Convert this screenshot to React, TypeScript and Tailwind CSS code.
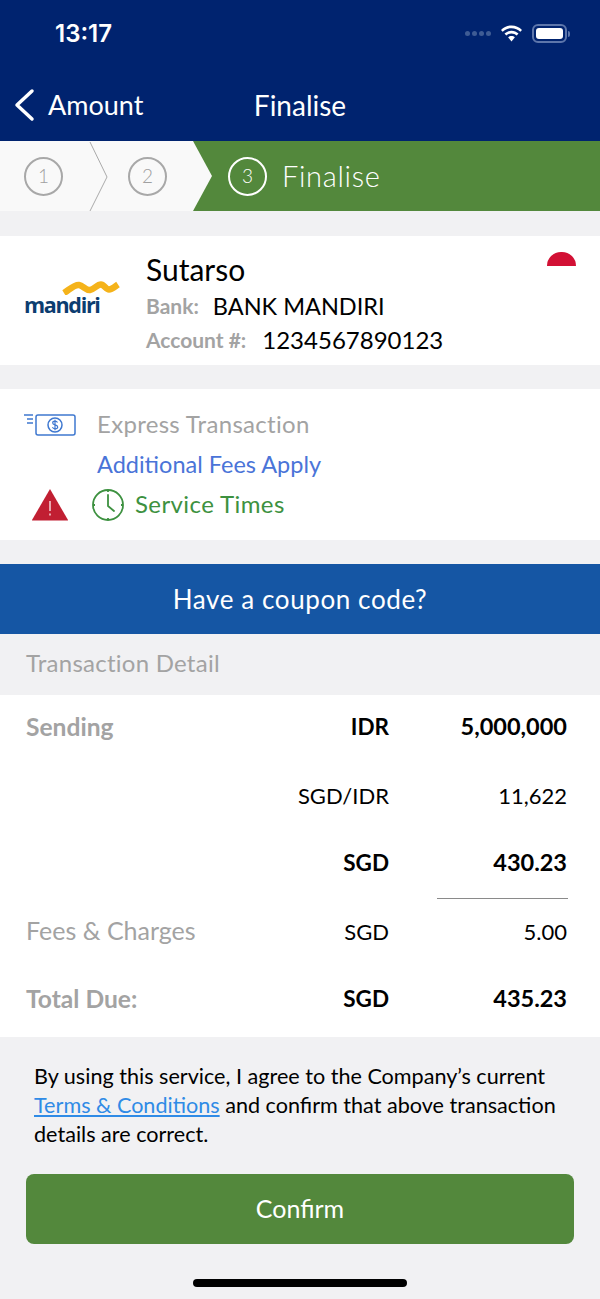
// Finalise step of the remittance flow: recipient, coupon, transaction detail, confirm.
const font = "font-['Lato','Noto_Sans',sans-serif]";

function StepCircle({ n, active }: { n: number; active?: boolean }) {
  return (
    <span
      className={`flex h-[39px] w-[39px] shrink-0 items-center justify-center rounded-full border-2 text-[19px] font-light ${
        active ? "border-white text-white" : "border-[#a8a8a8] text-[#a0a0a0]"
      }`}
    >
      {n}
    </span>
  );
}

function StatusIcons() {
  return (
    <div className="flex items-center">
      <div className="mr-[8px] flex gap-[2px]">
        {[0, 1, 2, 3].map((i) => (
          <span key={i} className="h-[5px] w-[5px] rounded-full bg-[#3f5c94]" />
        ))}
      </div>
      <svg width="25" height="18" viewBox="0 0 24 18" fill="#fff" className="mr-[8px]">
        <path d="M12 3.2c3.4 0 6.5 1.3 8.8 3.5l1.7-1.8C19.8 2.200 16.100.5 12 .5S4.200 2.200 1.500 4.900l1.700 1.800C5.500 4.500 8.600 3.200 12 3.200z" />
        <path d="M12 8.400c2 0 3.800.8 5.200 2l1.800-1.800C17.100 6.900 14.700 5.800 12 5.800s-5.100 1.100-7 2.800l1.800 1.800c1.400-1.200 3.200-2 5.200-2z" />
        <path d="M12 11c-1.300 0-2.500.5-3.400 1.300L12 16.500l3.400-4.200C14.500 11.500 13.300 11 12 11z" />
      </svg>
      <div className="flex items-center">
        <div className="h-[19px] w-[35px] rounded-[6px] border-2 border-[#5d76ab] p-[2px]">
          <div className="h-full w-full rounded-[3px] bg-white" />
        </div>
        <span className="ml-[1px] h-[6px] w-[2px] rounded-r bg-[#5d76ab]" />
      </div>
    </div>
  );
}

function MandiriLogo() {
  return (
    <div className="relative h-[40px] w-[100px] shrink-0">
      <svg width="58" height="14" viewBox="0 0 58 14" fill="none" className="absolute left-[38px] top-0">
        <path
          d="M2 12 C7 9 12 3.500 17 4 C21 4.500 24 9.500 28 9 C32 8.500 35 3.500 39 3.500 C42 3.500 44 8.500 47 8.500 C50 8.500 53 5.500 56 3.500"
          stroke="#f5b31a"
          strokeWidth="6.500"
        />
      </svg>
      <span className="absolute left-0 top-[10px] font-['Open_Sans',sans-serif] text-[21.5px] font-bold leading-[28px] tracking-[-1.3px] text-[#0c3d70]">
        mandiri
      </span>
    </div>
  );
}

function ExpressIcon() {
  return (
    <svg width="54" height="24" viewBox="0 0 54 24" fill="none" stroke="#3f78d0" strokeWidth="1.500">
      <rect x="12" y="2" width="39" height="20" rx="2" />
      <circle cx="31" cy="12" r="7" />
      <path d="M0 2h9M3 6h6M3 10h6" />
      <path d="M33.500 9.500c-.5-1-1.300-1.300-2.500-1.300-1.300 0-2.300.7-2.300 1.800 0 2.500 5 1.300 5 4 0 1.100-1.100 1.800-2.500 1.800-1.300 0-2.300-.5-2.800-1.500M31 6.800v10.400" strokeWidth="1.200" />
    </svg>
  );
}

function ClockIcon() {
  return (
    <svg width="34" height="34" viewBox="0 0 34 34" fill="none" stroke="#3d9140" strokeWidth="1.800">
      <circle cx="17" cy="17" r="15" />
      <path d="M17 7v11l6 5" strokeLinecap="round" strokeLinejoin="round" />
      <path d="M17 2v2M17 30v2M2 17h2M30 17h2" />
    </svg>
  );
}

function WarningIcon() {
  return (
    <svg width="38" height="33" viewBox="0 0 38 33">
      <path d="M19 1 L37 32 a.5 .5 0 0 1 -.5 .5 H1.500 a.5 .5 0 0 1 -.5 -.5 Z" fill="#c11f32" />
      <path d="M19 13v10M19 25.500v2" stroke="#f5d5d8" strokeWidth="1.500" />
    </svg>
  );
}

function DetailRow({
  label,
  currency,
  amount,
  bold,
}: {
  label?: string;
  currency: string;
  amount: string;
  bold?: boolean;
}) {
  return (
    <div className="grid h-[68px] grid-cols-[260px_103px_1fr] items-center pb-[4px] pl-[26px] pr-[33px]">
      <span className={`text-[#a3a3a3] ${bold ? "text-[24.6px] font-bold" : "text-[25px]"}`}>{label}</span>
      <span className={`text-right text-black ${bold ? "text-[22.5px] font-bold" : "text-[22px]"}`}>{currency}</span>
      <span className={`text-right text-black ${bold ? "text-[23.5px] font-bold" : "text-[22px]"}`}>{amount}</span>
    </div>
  );
}

export default function App() {
  return (
    <div className={`${font} flex h-[1299px] w-[600px] flex-col overflow-hidden bg-[#f1f1f3]`}>
      {/* status + nav bar */}
      <header className="h-[141px] shrink-0 bg-[#00236f] text-white">
        <div className="flex h-[66px] items-center justify-between pl-[55px] pr-[30px] pt-[1px]">
          <span className="font-['Inter',sans-serif] text-[24px] font-semibold leading-none">13:17</span>
          <StatusIcons />
        </div>
        <div className="relative flex h-[75px] items-center justify-center pt-[3px] text-[28px]">
          <div className="absolute left-[13px] top-[19px] flex items-center">
            <svg width="22" height="34" viewBox="0 0 22 34" fill="none" stroke="#fff" strokeWidth="3.500" strokeLinecap="round" strokeLinejoin="round">
              <path d="M19 3 L4 17 L19 31" />
            </svg>
            <span className="ml-[13px] text-[27px]">Amount</span>
          </div>
          <span>Finalise</span>
        </div>
      </header>

      {/* stepper */}
      <div className="relative flex h-[70px] shrink-0 items-center bg-[#53883c]">
        <div className="flex h-full w-[212px] shrink-0 items-center bg-[#f9f9f9] pl-[24px] [clip-path:polygon(0_0,193px_0,212px_50%,193px_100%,0_100%)]">
          <StepCircle n={1} />
          <span className="ml-[65px]">
            <StepCircle n={2} />
          </span>
        </div>
        <svg width="20" height="70" viewBox="0 0 20 70" fill="none" className="absolute left-[88px] top-0">
          <path d="M2 1 L19 36 L2 70" stroke="#aaaaaa" strokeWidth="1" />
        </svg>
        <div className="ml-[16px] flex items-center gap-[15px]">
          <StepCircle n={3} active />
          <span className="text-[29px] font-light tracking-[0.7px] text-white">Finalise</span>
        </div>
      </div>

      {/* recipient */}
      <section className="relative mt-[25px] flex h-[129px] shrink-0 items-center bg-white pl-[24px]">
        <MandiriLogo />
        <div className="ml-[22px] pt-[4px]">
          <p className="text-[30px] leading-[40px] text-black">Sutarso</p>
          <p className="flex items-center text-[23.5px] leading-[34px] text-black">
            <span className="mr-[14px] text-[21px] font-bold text-[#a3a3a3]">Bank:</span>BANK MANDIRI
          </p>
          <p className="flex items-center text-[24px] leading-[33px] text-black">
            <span className="mr-[16px] text-[21px] font-bold text-[#a3a3a3]">Account #:</span>
            1234567890123
          </p>
        </div>
        <span className="absolute right-[24px] top-[16px] h-[14px] w-[29px] rounded-t-full bg-[#d21034]" />
      </section>

      {/* express */}
      <section className="mt-[24px] h-[151px] shrink-0 bg-white pl-[24px] pt-[16px]">
        <div className="flex h-[39px] items-center">
          <span className="w-[73px]">
            <ExpressIcon />
          </span>
          <span className="-mt-[2px] text-[24px] tracking-[0.3px] text-[#a3a3a3]">Express Transaction</span>
        </div>
        <p className="ml-[73px] mt-[1px] text-[23.5px] leading-[39px] text-[#4a74d8]">Additional Fees Apply</p>
        <div className="mt-[1px] flex h-[39px] items-center pl-[7px]">
          <WarningIcon />
          <span className="ml-[22px]">
            <ClockIcon />
          </span>
          <span className="-mt-[2px] ml-[10px] text-[24px] tracking-[0.4px] text-[#3d9140]">Service Times</span>
        </div>
      </section>

      {/* coupon */}
      <div className="mt-[24px] flex h-[70px] shrink-0 items-center justify-center bg-[#1556a4] text-[26px] tracking-[0.6px] text-white">
        Have a coupon code?
      </div>

      <div className="flex h-[61px] shrink-0 items-center pb-[3px] pl-[26px] text-[24px] tracking-[0.25px] text-[#a3a3a3]">
        Transaction Detail
      </div>

      {/* detail table */}
      <section className="h-[342px] shrink-0 bg-white">
        <DetailRow label="Sending" currency="IDR" amount="5,000,000" bold />
        <DetailRow currency="SGD/IDR" amount="11,622" />
        <DetailRow currency="SGD" amount="430.23" bold />
        <div className="relative">
          <div className="absolute -top-px left-[437px] right-[32px] h-px bg-[#8a8a8a]" />
        </div>
        <DetailRow label="Fees & Charges" currency="SGD" amount="5.00" />
        <DetailRow label="Total Due:" currency="SGD" amount="435.23" bold />
      </section>

      {/* terms + confirm */}
      <footer className="flex flex-1 flex-col px-[26px]">
        <p className="mt-[25px] pl-[8px] text-[21.6px] leading-[29px] text-black">
          By using this service, I agree to the Company’s current
          <br />
          <a className="text-[#2f8be6] underline">Terms &amp; Conditions</a> and confirm that above transaction
          <br />
          details are correct.
        </p>
        <button className="mt-[25px] h-[70px] rounded-[8px] bg-[#53883c] text-[25px] text-white">Confirm</button>
        <div className="mx-auto mt-[35px] h-[8px] w-[214px] rounded-full bg-black" />
      </footer>
    </div>
  );
}
